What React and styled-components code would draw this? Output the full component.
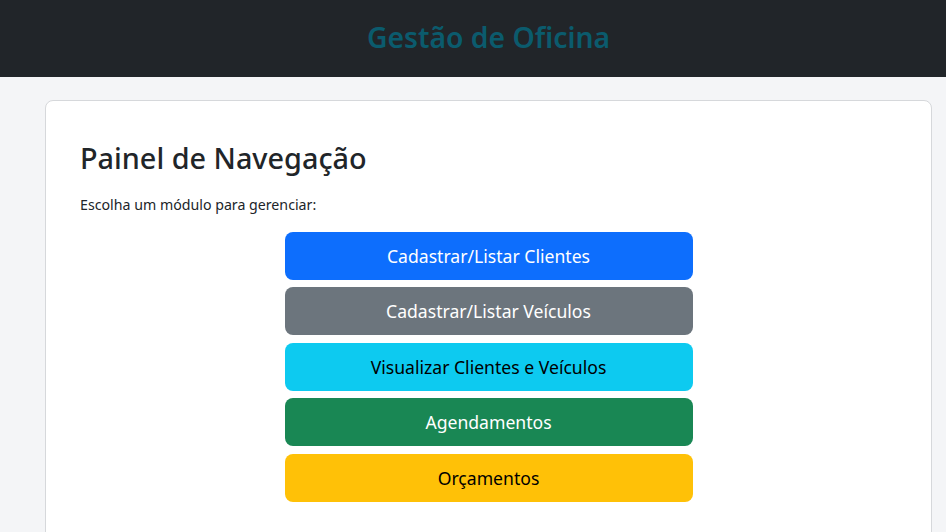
import styled, { createGlobalStyle } from "styled-components";

const GlobalStyle = createGlobalStyle`
  * {
    box-sizing: border-box;
  }

  body {
    margin: 0;
    background-color: #f4f5f7;
    font-family: "Noto Sans", "Open Sans", sans-serif;
    color: #212529;
  }
`;

const Header = styled.header`
  height: 77px;
  padding: 0 14px 4px 45px;
  background-color: #212529;
  display: flex;
  align-items: center;
  justify-content: center;
`;

const HeaderTitle = styled.h1`
  margin: 0;
  font-size: 28.3px;
  font-weight: 600;
  color: #0b5b6d;
`;

const Main = styled.main`
  padding: 23px 14px 0 45px;
`;

const Card = styled.section`
  background-color: #fff;
  border: 1px solid #d6d8db;
  border-radius: 8px;
  padding: 40px 35px;
  min-height: 460px;
`;

const Title = styled.h2`
  margin: 0 0 17px -1px;
  font-size: 28.8px;
  font-weight: 500;
  line-height: 1.2;
`;

const Subtitle = styled.p`
  margin: 0 0 15px -1px;
  font-size: 14.2px;
  line-height: 24px;
`;

const ButtonList = styled.div`
  width: 408px;
  margin: 0 auto;
  display: flex;
  flex-direction: column;
  gap: 7.5px;
`;

const NavButton = styled.button`
  height: 48px;
  border: none;
  border-radius: 8px;
  background-color: ${(p) => p.$bg};
  color: ${(p) => p.$fg};
  font-family: inherit;
  font-size: 17.6px;
  cursor: pointer;
`;

const modulos = [
  { label: "Cadastrar/Listar Clientes", bg: "#0d6efd", fg: "#fff" },
  { label: "Cadastrar/Listar Veículos", bg: "#6c757d", fg: "#fff" },
  { label: "Visualizar Clientes e Veículos", bg: "#0dcaf0", fg: "#000" },
  { label: "Agendamentos", bg: "#198754", fg: "#fff" },
  { label: "Orçamentos", bg: "#ffc107", fg: "#000" },
];

export default function App() {
  return (
    <>
      <GlobalStyle />
      <Header>
        <HeaderTitle>Gestão de Oficina</HeaderTitle>
      </Header>
      <Main>
        <Card>
          <Title>Painel de Navegação</Title>
          <Subtitle>Escolha um módulo para gerenciar:</Subtitle>
          <ButtonList>
            {modulos.map((m) => (
              <NavButton key={m.label} $bg={m.bg} $fg={m.fg}>
                {m.label}
              </NavButton>
            ))}
          </ButtonList>
        </Card>
      </Main>
    </>
  );
}
